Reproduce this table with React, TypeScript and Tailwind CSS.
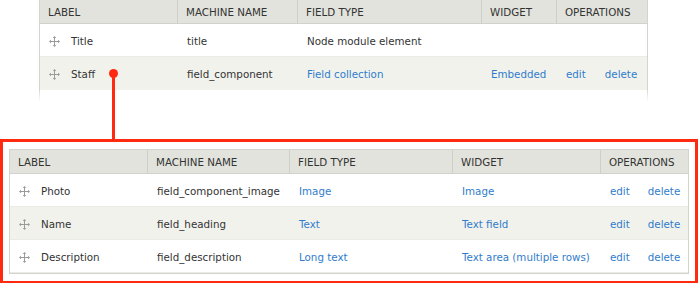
import React from 'react';

type Row = {
  label: string;
  machine: string;
  type: string;
  typeLink?: boolean;
  widget?: string;
  ops?: boolean;
};

const topRows: Row[] = [
  { label: 'Title', machine: 'title', type: 'Node module element' },
  { label: 'Staff', machine: 'field_component', type: 'Field collection', typeLink: true, widget: 'Embedded', ops: true },
];

const subRows: Row[] = [
  { label: 'Photo', machine: 'field_component_image', type: 'Image', typeLink: true, widget: 'Image', ops: true },
  { label: 'Name', machine: 'field_heading', type: 'Text', typeLink: true, widget: 'Text field', ops: true },
  { label: 'Description', machine: 'field_description', type: 'Long text', typeLink: true, widget: 'Text area (multiple rows)', ops: true },
];

function DragHandle() {
  return (
    <svg width="11" height="11" viewBox="0 0 11 11" className="shrink-0">
      <g fill="#9a9a9a">
        <rect x="5" y="1.5" width="1" height="8" />
        <rect x="1.5" y="5" width="8" height="1" />
        <path d="M5.5 0 L7.2 2 L3.8 2 Z" />
        <path d="M5.5 11 L7.2 9 L3.8 9 Z" />
        <path d="M0 5.5 L2 3.8 L2 7.2 Z" />
        <path d="M11 5.5 L9 3.8 L9 7.2 Z" />
      </g>
    </svg>
  );
}

function FieldTable({
  cols,
  rows,
  opsGap,
  open,
}: {
  cols: string;
  rows: Row[];
  opsGap: string;
  open?: boolean;
}) {
  const headers = ['LABEL', 'MACHINE NAME', 'FIELD TYPE', 'WIDGET', 'OPERATIONS'];
  return (
    <div className={`border border-[#d4d4cf] bg-white ${open ? 'border-b-0' : ''}`}>
      {/* header */}
      <div className={`grid ${cols} h-[24px] bg-[#e2e3dd] border-b border-[#d2d2cc]`}>
        {headers.map((h, i) => (
          <div
            key={h}
            className={`flex items-center pl-[8px] pt-[2px] text-[#333] ${i < 4 ? 'border-r border-[#cfcfc9]' : ''}`}
          >
            {h}
          </div>
        ))}
      </div>
      {rows.map((r, i) => (
        <div
          key={r.label}
          className={`grid ${cols} h-[33px] pt-[2px] ${open && i === rows.length - 1 ? '' : 'border-b border-[#ebebe6]'} ${
            i % 2 === 1 ? 'bg-[#f2f2ed]' : 'bg-white'
          }`}
        >
          <div className="flex items-center gap-[11px] pl-[9px] text-[#333]">
            <DragHandle />
            {r.label}
          </div>
          <div className="flex items-center pl-[9px] text-[#333]">{r.machine}</div>
          <div className={`flex items-center pl-[9px] ${r.typeLink ? 'text-[#2f7ccc]' : 'text-[#333]'}`}>{r.type}</div>
          <div className="flex items-center pl-[9px] text-[#2f7ccc]">{r.widget ?? ''}</div>
          <div className={`flex items-center pl-[9px] text-[#2f7ccc] ${opsGap}`}>
            {r.ops && (
              <>
                <span>edit</span>
                <span>delete</span>
              </>
            )}
          </div>
        </div>
      ))}
    </div>
  );
}

export default function App() {
  return (
    <div
      className="relative w-[700px] h-[283px] bg-white overflow-hidden text-[10.3px] leading-none"
      style={{ fontFamily: '"DejaVu Sans", "Liberation Sans", sans-serif' }}
    >
      {/* Parent content type fields, cut off at the bottom */}
      <div className="ml-[39px] w-[609px] -mt-px">
        <FieldTable cols="grid-cols-[138px_120px_184px_75px_1fr]" rows={topRows} opsGap="gap-[19px]" open />
        <div className="h-[12px] bg-gradient-to-b from-[#d8d8d3] to-white">
          <div className="mx-px h-full bg-white" />
        </div>
      </div>

      {/* Connector */}
      <div className="absolute left-[109px] top-[69px] w-[9px] h-[9px] rounded-full bg-[#ff2a10]" />
      <div className="absolute left-[112px] top-[73px] w-[3px] h-[66px] bg-[#ff2a10]" />

      {/* Field collection fields */}
      <div className="mt-[37px] w-[698px] h-[145px] border-[3px] border-[#ff2a10] pl-[6px] pt-[7px] pr-[6px]">
        <FieldTable cols="grid-cols-[138px_142px_163px_148px_1fr]" rows={subRows} opsGap="gap-[18px]" />
      </div>
    </div>
  );
}
